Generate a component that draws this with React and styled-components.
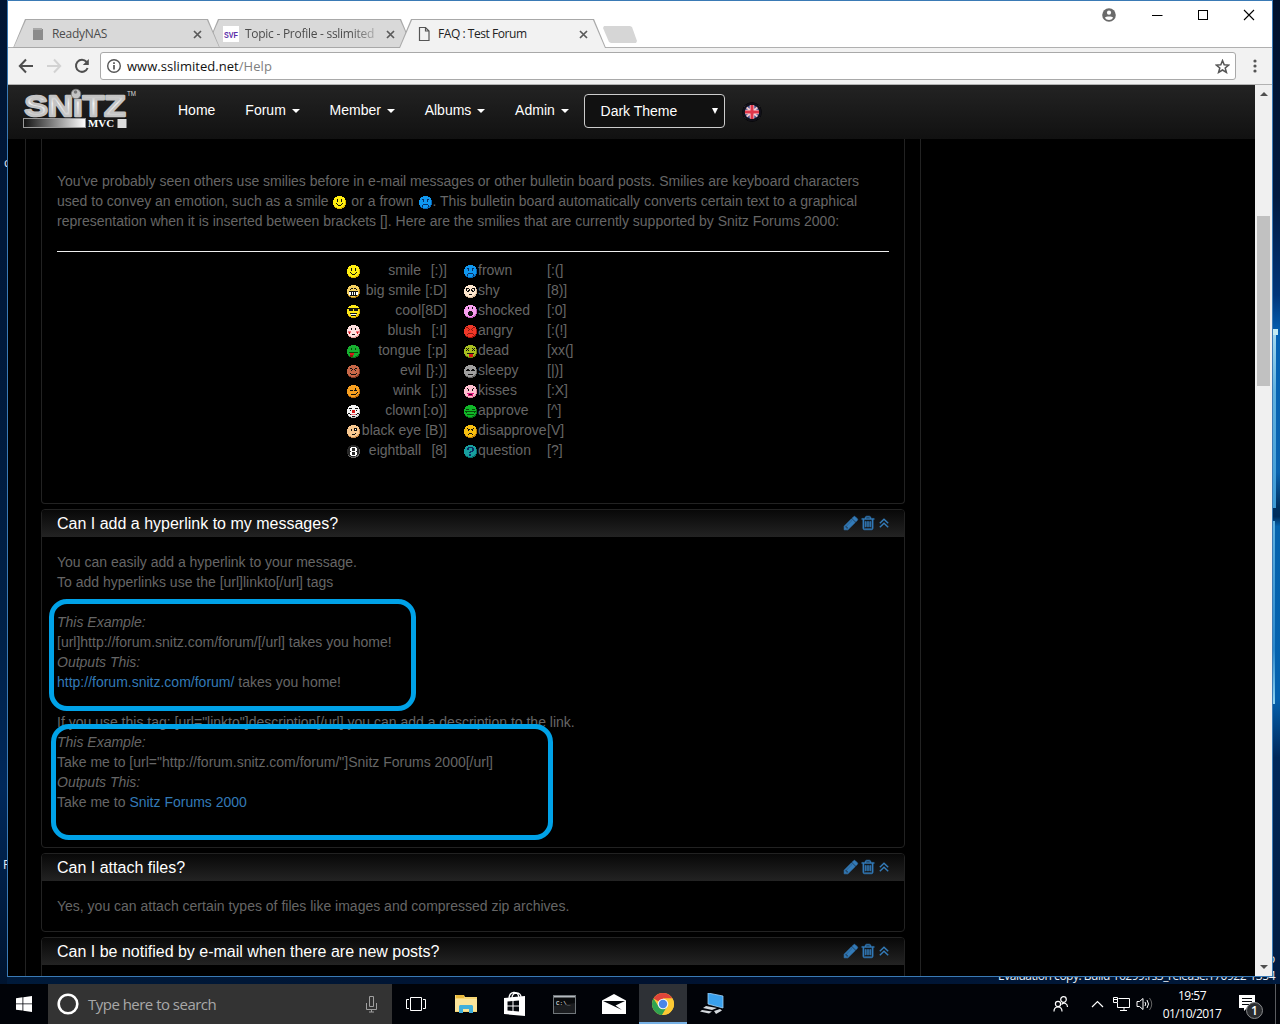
import React from "react";
import styled, { createGlobalStyle } from "styled-components";

const Global = createGlobalStyle`
  *, *::before, *::after { box-sizing: border-box; }
  body { margin: 0; background: #000; }
`;

const ui = `"Open Sans", "Noto Sans", sans-serif`;
const web = `"Liberation Sans", Arial, sans-serif`;

/* ---------- desktop and window ---------- */

const Desktop = styled.div`
  position: relative;
  width: 1280px;
  height: 1024px;
  overflow: hidden;
  display: flex;
  flex-direction: column;
  font-family: ${ui};
  background: linear-gradient(90deg, #001a3a, #001230 50%, #00193a);
`;

const RightGlow = styled.div`
  position: absolute;
  left: 1273px;
  top: 0;
  width: 7px;
  height: 984px;
  background:
    linear-gradient(#c4ecf4, #c4ecf4) 0 329px / 5px 6px no-repeat,
    linear-gradient(#a9dcf0, #5fb0df 35%, #3d9ad6) 0 329px / 3px 179px no-repeat,
    linear-gradient(#5fb2e2, #2b88cc 70%, #8fd4f2) 0 521px / 2px 183px no-repeat,
    linear-gradient(#00112c, #001a40 20%, #00357a 30%, #0563b5 34%, #0a63ae 48%, #003060 51.5%, #002d5c 52.5%, #0563ad 53.5%, #0461ae 71%, #00285a 77%, #001b40);
`;

const LeftGlow = styled.div`
  position: absolute;
  left: 0;
  top: 0;
  width: 7px;
  height: 984px;
  background: linear-gradient(#001534, #001a3c 40%, #002148 65%, #00285a 80%, #00142f);
`;

const DeskLabel = styled.span`
  position: absolute;
  left: ${(p) => p.$x}px;
  top: ${(p) => p.$y}px;
  font-size: 12px;
  line-height: 16px;
  letter-spacing: ${(p) => p.$ls || 0}px;
  white-space: nowrap;
  color: #e8eef5;
`;

const Window = styled.div`
  position: relative;
  width: 1266px;
  height: 977px;
  margin-left: 7px;
  margin-bottom: 7px;
  flex: none;
  display: flex;
  flex-direction: column;
  border: 1px solid #3a7ab5;
  background: #fff;
`;

const TitleBar = styled.div`
  display: flex;
  justify-content: space-between;
  height: 46px;
  flex: none;
`;

const Tabs = styled.div`
  display: flex;
  align-items: flex-end;
  padding-left: 5px;
  height: 47px;
`;

const tabShape = `polygon(12px 0, calc(100% - 12px) 0, 100% 100%, 0 100%)`;

const Tab = styled.div`
  position: relative;
  z-index: ${(p) => p.$z};
  width: 207px;
  height: 29px;
  margin-right: -14px;
  background: #a8a8a8;
  clip-path: ${tabShape};
  display: flex;
  align-items: center;
  padding: 1px 18px 0 17px;
  &::before {
    content: "";
    position: absolute;
    inset: 1px 1px ${(p) => (p.$active ? "0" : "1px")} 1px;
    background: ${(p) => (p.$active ? "#f2f2f2" : "#d9d9d9")};
    clip-path: ${tabShape};
  }
  > * { position: relative; }
`;

const TabTitle = styled.span`
  flex: 1;
  margin-left: ${(p) => p.$gap || 6}px;
  font-size: 12px;
  line-height: 16px;
  letter-spacing: ${(p) => p.$ls || 0}px;
  white-space: nowrap;
  color: ${(p) => (p.$active ? "#222" : "#4c4c4c")};
  ${(p) => p.$fade && "mask-image: linear-gradient(90deg, #000 105px, rgba(0,0,0,.3) 130px);"}
`;

const NewTab = styled.div`
  width: 34px;
  height: 17px;
  margin: 0 0 5px 11px;
  background: #d6d6d6;
  clip-path: polygon(1px 0, 27px 0, 29px 1px, 34px 15px, 33px 17px, 8px 17px, 6px 16px, 0 2px);
`;

const WinControls = styled.div`
  display: flex;
  gap: 31px;
  align-items: center;
  height: 28px;
  padding-right: 16px;
`;

const Toolbar = styled.div`
  display: flex;
  align-items: center;
  height: 38px;
  flex: none;
  padding: 0 9px 0 10px;
  background: #f2f2f2;
  border-top: 1px solid #b0b0b0;
  border-bottom: 1px solid #b2b2b2;
`;

const NavIcons = styled.div`
  display: flex;
  gap: 12px;
  width: 82px;
`;

const Omnibox = styled.div`
  flex: 1;
  display: flex;
  align-items: center;
  height: 28px;
  padding: 0 5px;
  background: #fff;
  border: 1px solid #a9a9a9;
  border-radius: 3px;
`;

const Url = styled.span`
  flex: 1;
  margin-left: 5px;
  font-size: 13px;
  letter-spacing: 0.04px;
  color: #111;
  span { color: #808080; }
`;

const MenuSlot = styled.div`
  width: 17px;
  margin-left: 10px;
  display: flex;
  justify-content: center;
`;

/* ---------- web page ---------- */

const Viewport = styled.div`
  display: flex;
  height: 891px;
  overflow: hidden;
`;

const Page = styled.div`
  position: relative;
  width: 1247px;
  height: 891px;
  overflow: hidden;
  display: flex;
  flex-direction: column;
  background: #000;
  font-family: ${web};
`;

const NavBar = styled.nav`
  display: flex;
  height: 54px;
  flex: none;
  padding-left: 15px;
  background: linear-gradient(#232323, #111);
`;

const LogoSlot = styled.div`
  width: 140px;
  padding-top: 3px;
`;

const NavItem = styled.div`
  padding: 15px;
  font-size: 14px;
  line-height: 20px;
  color: #fff;
  white-space: nowrap;
`;

const Caret = styled.i`
  display: inline-block;
  margin-left: 5.75px;
  vertical-align: middle;
  border-top: 4px solid #fff;
  border-left: 4px solid transparent;
  border-right: 4px solid transparent;
`;

const ThemeSelect = styled.div`
  display: flex;
  align-items: center;
  justify-content: space-between;
  width: 141px;
  height: 34px;
  margin-top: 9px;
  padding: 0 6px 0 16px;
  border: 1px solid #ccc;
  border-radius: 4px;
  background: #111;
  color: #fff;
  font-size: 14px;
`;

const SelectArrow = styled.i`
  border-top: 6px solid #fff;
  border-left: 3.5px solid transparent;
  border-right: 3.5px solid transparent;
`;

const FlagSlot = styled.div`
  padding: 17px 0 0 17px;
`;

const Column = styled.main`
  width: 896px;
  height: 837px;
  margin-left: 17px;
  padding: 0 15px;
  border-left: 1px solid #222;
  border-right: 1px solid #222;
`;

const Panel = styled.section`
  width: 864px;
  margin-bottom: 5px;
  border: 1px solid #222;
  border-radius: 4px;
  overflow: hidden;
  ${(p) => p.$cut && "border-top: 0; border-top-left-radius: 0; border-top-right-radius: 0; height: 365px;"}
`;

const PanelHead = styled.header`
  display: flex;
  align-items: center;
  justify-content: space-between;
  height: 27px;
  padding: 0 15px;
  background: linear-gradient(#080808, #232323);
  color: #fff;
  font-size: 16px;
`;

const Actions = styled.span`
  display: flex;
  align-items: center;
  gap: 2px;
  padding-bottom: 1px;
  color: #337ab7;
`;

const PanelBody = styled.div`
  padding: ${(p) => p.$top || 15}px 15px 15px;
  font-size: 14px;
  line-height: 20px;
  color: #666;
`;

const Line = styled.div`
  height: 20px;
  white-space: nowrap;
  font-style: ${(p) => (p.$em ? "italic" : "normal")};
`;

const Link = styled.a`
  color: #337ab7;
`;

const Rule = styled.hr`
  height: 1px;
  margin: 20px 0 8px;
  border: 0;
  background: #eee;
`;

const SmileyTable = styled.div`
  width: 228px;
  margin: 0 auto 0 289px;
`;

const SmileyRow = styled.div`
  display: grid;
  grid-template-columns: 15px 60px 26px 16px 15px 69px 27px;
  height: 20px;
  white-space: nowrap;
`;

const Cell = styled.span`
  display: flex;
  align-items: center;
  justify-content: ${(p) => (p.$right ? "flex-end" : "flex-start")};
  padding-top: ${(p) => (p.$icon ? 2 : 0)}px;
`;

const Highlight = styled.div`
  position: absolute;
  left: ${(p) => p.$x}px;
  top: ${(p) => p.$y}px;
  width: ${(p) => p.$w}px;
  height: ${(p) => p.$h}px;
  border: 5px solid #00a2e8;
  border-radius: 18px;
`;

const ScrollBar = styled.div`
  display: flex;
  flex-direction: column;
  align-items: center;
  justify-content: space-between;
  width: 17px;
  padding: 7px 0;
  background: #f0f0f0;
`;

const ScrollTrack = styled.div`
  flex: 1;
  padding-top: 120px;
`;

const Thumb = styled.div`
  width: 13px;
  height: 170px;
  background: #c1c1c1;
`;

const Arrow = styled.i`
  border-left: 4px solid transparent;
  border-right: 4px solid transparent;
  ${(p) => (p.$down ? "border-top" : "border-bottom")}: 4px solid #505050;
`;

/* ---------- taskbar ---------- */

const TaskBar = styled.div`
  position: relative;
  display: flex;
  height: 40px;
  background: #010308;
`;

const TaskButton = styled.div`
  display: flex;
  align-items: center;
  justify-content: center;
  width: 48px;
  height: 40px;
  margin-right: ${(p) => p.$mr ?? 1}px;
  ${(p) => p.$active && "background: #2e3136; border-bottom: 2px solid #76b0e4; padding-top: 2px;"}
`;

const SearchBox = styled.div`
  display: flex;
  align-items: center;
  width: 344px;
  height: 40px;
  padding: 0 13px 0 8px;
  background: #333;
  color: #a8a8a8;
  font-size: 15px;
  span { flex: 1; margin-left: 8px; letter-spacing: -0.52px; }
`;

const Tray = styled.div`
  display: flex;
  align-items: center;
  margin-left: auto;
  color: #fff;
`;

const TraySlot = styled.div`
  display: flex;
  justify-content: center;
  width: ${(p) => p.$w}px;
`;

const Clock = styled.div`
  width: 76px;
  padding-top: 1px;
  text-align: center;
  font-size: 12px;
  line-height: 18px;
  letter-spacing: -0.5px;
`;

const ShowDesktop = styled.div`
  width: 5px;
  height: 40px;
  border-left: 1px solid #5a5c60;
`;

/* ---------- smilies ---------- */

const INK = { k: "#111", w: "#fff", r: "#d81818", d: "#8a1a10", p: "#e0107a", o: "#f0707c", g: "#084a08", n: "#0a2f66" };
const MASK = "M4 0h5v1h2v1h1v2h1v5h-1v2h-1v1h-2v1h-5v-1h-2v-1h-1v-2h-1v-5h1v-2h1v-1h2z";

const FACES = {
  smile: ["#ffee10", "#e0b800", "k4,3,1,3 k8,3,1,3 k3,7,1,1 k9,7,1,1 k4,8,1,1 k8,8,1,1 k5,9,3,1"],
  bigsmile: ["#f4d060", "#b98514", "k3,4,1,1 k4,3,2,1 k7,3,2,1 k9,4,1,1 k2,6,9,1 w2,7,9,3 k4,7,1,3 k6,7,1,3 k8,7,1,3 k3,10,7,1"],
  cool: ["#ffe818", "#d8a800", "k1,3,11,1 k2,4,4,2 k7,4,4,2 k3,8,7,1 w4,9,5,1 k4,10,5,1"],
  blush: ["#ffe0e0", "#e8a0a0", "k4,3,1,2 k8,3,1,2 o1,6,3,2 o9,6,3,2 r2,7,1,2 r10,7,1,2 k5,9,3,1"],
  tongue: ["#18b030", "#0a7a1c", "g4,3,1,2 g8,3,1,2 g2,7,9,1 r3,8,4,2 d3,10,3,2"],
  evil: ["#c86848", "#8a3a24", "k3,3,2,1 k5,4,1,1 k7,4,1,1 k8,3,2,1 k4,5,1,1 k8,5,1,1 k3,8,1,1 k4,9,5,1 k9,8,1,1"],
  wink: ["#f8a020", "#c06a08", "k3,5,3,1 k8,3,1,2 k7,5,3,1 k10,7,1,1 k4,9,5,1 k9,8,1,1"],
  clown: ["#f4f4f4", "#c8c8c8", "k2,3,3,1 k8,3,3,1 k3,5,1,1 k9,5,1,1 r5,5,3,3 k1,8,2,1 k10,8,2,1 k3,9,1,1 k9,9,1,1 o4,9,5,1 k5,11,3,1"],
  blackeye: ["#f8c890", "#d09050", "k4,4,1,2 k7,3,3,3 w8,4,1,1 k5,9,3,1 k8,8,1,1"],
  eightball: ["#282828", "#686868", "w4,2,5,1 w3,3,2,3 w8,3,2,3 w4,6,5,1 w3,7,2,3 w8,7,2,3 w4,10,5,1"],
  frown: ["#1098f0", "#0868b8", "n3,3,2,1 n8,3,2,1 n4,4,1,2 n8,4,1,2 n4,8,5,1 n3,9,1,2 n9,9,1,2"],
  shy: ["#ffe8d0", "#d8b898", "k2,3,3,1 k8,3,3,1 k2,4,1,2 k5,4,1,2 k7,4,1,2 k10,4,1,2 k4,5,1,1 k8,5,1,1 k3,6,2,1 k8,6,2,1 k5,9,3,1"],
  shocked: ["#f8a0f0", "#c860c0", "k4,2,1,2 k8,2,1,2 k5,6,3,1 k4,7,5,3 k5,10,3,1"],
  angry: ["#f03828", "#a81810", "d2,2,2,1 d4,3,1,1 d8,3,1,1 d9,2,2,1 d4,5,1,1 d8,5,1,1 d5,4,1,1 d7,4,1,1 d4,8,5,1 d3,9,1,1 d9,9,1,1"],
  dead: ["#a8c020", "#708408", "k2,3,1,1 k4,3,1,1 k3,4,1,1 k2,5,1,1 k4,5,1,1 k8,3,1,1 k10,3,1,1 k9,4,1,1 k8,5,1,1 k10,5,1,1 k3,8,7,1 r5,9,4,3"],
  sleepy: ["#a0a0a0", "#686868", "k2,5,4,1 k7,5,4,1 k3,4,2,1 k8,4,2,1 k4,9,5,1"],
  kisses: ["#ffc0d0", "#e088a0", "k3,3,1,1 k4,4,1,1 k8,4,1,1 k9,3,1,1 k4,5,1,1 k8,5,1,1 p3,8,7,1 p4,9,5,2 k5,9,3,1"],
  approve: ["#10b828", "#087818", "g2,4,3,1 g8,4,3,1 g1,6,11,1 g2,7,1,1 g10,7,1,1 g3,9,7,1"],
  disapprove: ["#f8c010", "#c08008", "k3,3,1,1 k4,4,2,1 k7,4,2,1 k9,3,1,1 k4,5,1,1 k8,5,1,1 k5,8,3,1 k4,9,1,1 k8,9,1,1"],
  question: ["#18a0a0", "#087070", "n4,2,5,1 n3,3,2,2 n8,3,2,3 n6,6,3,1 n5,7,2,1 n5,9,2,2"],
};

const Face = styled.svg`
  width: 15px;
  height: 15px;
  flex: none;
  vertical-align: middle;
`;

function Smiley({ name }) {
  const [fill, shade, marks] = FACES[name];
  return (
    <Face viewBox="-1 -1 15 15" shapeRendering="crispEdges">
      <path d={MASK} fill={shade} />
      <path d="M4 0h5v1h2v1h1v7h-1v1h-1v1h-2v1h-4v-1h-2v-1h-1v-1h-1v-5h1v-2h1v-1h2z" fill={fill} />
      {marks.split(" ").map((m) => {
        const [x, y, w, h] = m.slice(1).split(",");
        return <rect key={m} x={x} y={y} width={w} height={h} fill={INK[m[0]]} />;
      })}
    </Face>
  );
}

const SMILIES = [
  ["smile", "smile", "[:)]", "frown", "frown", "[:(]"],
  ["bigsmile", "big smile", "[:D]", "shy", "shy", "[8)]"],
  ["cool", "cool", "[8D]", "shocked", "shocked", "[:0]"],
  ["blush", "blush", "[:I]", "angry", "angry", "[:(!]"],
  ["tongue", "tongue", "[:p]", "dead", "dead", "[xx(]"],
  ["evil", "evil", "[}:)]", "sleepy", "sleepy", "[|)]"],
  ["wink", "wink", "[;)]", "kisses", "kisses", "[:X]"],
  ["clown", "clown", "[:o)]", "approve", "approve", "[^]"],
  ["blackeye", "black eye", "[B)]", "disapprove", "disapprove", "[V]"],
  ["eightball", "eightball", "[8]", "question", "question", "[?]"],
];

/* ---------- icons ---------- */

const Icon = styled.svg`
  display: block;
  flex: none;
  margin: ${(p) => p.$m || 0};
`;

const Svg = ({ w = 16, h = w, box, fill = "none", children, ...rest }) => (
  <Icon width={w} height={h} viewBox={box || `0 0 ${w} ${h}`} fill={fill} {...rest}>
    {children}
  </Icon>
);

const TabClose = () => (
  <Svg w={9}><path d="M1 1l7 7M8 1l-7 7" stroke="#5a5a5a" strokeWidth="1.7" /></Svg>
);

const PencilIcon = () => (
  <Svg w={16} box="0 0 1792 1792" fill="currentColor" $m="0 -1px 0 0">
    <path d="M491 1536l91-91-235-235-91 91v107h128v128h107zm523-928q0-22-22-22-10 0-17 7l-542 542q-7 7-7 17 0 22 22 22 10 0 17-7l542-542q7-7 7-17zm-54-192l416 416-832 832h-416v-416zm683 96q0 53-37 90l-166 166-416-416 166-165q36-38 90-38 53 0 91 38l235 234q37 39 37 91z" stroke="currentColor" strokeWidth="70" />
  </Svg>
);

const TrashIcon = () => (
  <Svg w={16} box="0 0 1792 1792" fill="currentColor">
    <path stroke="currentColor" strokeWidth="60" d="M704 736v576q0 14-9 23t-23 9h-64q-14 0-23-9t-9-23v-576q0-14 9-23t23-9h64q14 0 23 9t9 23zm256 0v576q0 14-9 23t-23 9h-64q-14 0-23-9t-9-23v-576q0-14 9-23t23-9h64q14 0 23 9t9 23zm256 0v576q0 14-9 23t-23 9h-64q-14 0-23-9t-9-23v-576q0-14 9-23t23-9h64q14 0 23 9t9 23zm128 724v-948h-896v948q0 22 7 40.5t14.5 27 10.5 8.5h832q3 0 10.5-8.5t14.5-27 7-40.5zm-672-1076h448l-48-117q-7-9-17-11h-317q-10 2-17 11zm928 32v64q0 14-9 23t-23 9h-96v948q0 83-47 143.5t-113 60.5h-832q-66 0-113-58.5t-47-141.5v-952h-96q-14 0-23-9t-9-23v-64q0-14 9-23t23-9h309l70-167q15-37 54-63t79-26h320q40 0 79 26t54 63l70 167h309q14 0 23 9t9 23z" />
  </Svg>
);

const CollapseIcon = () => (
  <Svg w={11} h={14}>
    <path d="M1.8 7.300L6 3.300l4.200 4M1.800 11.300L6 7.300l4.200 4" stroke="currentColor" strokeWidth="1.500" />
  </Svg>
);

const Logo = () => (
  <Svg w={116} h={42}>
    <defs>
      <linearGradient id="metal" x1="0" y1="0" x2="0" y2="1">
        <stop offset="0" stopColor="#8c8c8c" />
        <stop offset=".45" stopColor="#f4f4f4" />
        <stop offset="1" stopColor="#bdbdbd" />
      </linearGradient>
      <linearGradient id="bar">
        <stop offset="0" stopColor="#111" />
        <stop offset="1" stopColor="#fff" />
      </linearGradient>
    </defs>
    <text x="1.500" y="27.500" textLength="101" lengthAdjust="spacingAndGlyphs" fontFamily="Liberation Sans, sans-serif" fontWeight="700" fontSize="30" fill="url(#metal)" stroke="#c4c4c4" strokeWidth="2.400" strokeLinejoin="round">SNıTZ</text>
    <circle cx="53" cy="6" r="4.800" fill="#c4c4c4" stroke="#777" strokeWidth=".8" />
    <circle cx="52.500" cy="4" r="1.800" fill="#777" />
    <text x="104" y="8" fontFamily="Liberation Sans, sans-serif" fontSize="6.5" textLength="9" lengthAdjust="spacingAndGlyphs" fill="#ddd">TM</text>
    <rect x=".5" y="30.5" width="62" height="9" fill="url(#bar)" stroke="#999" />
    <text x="65" y="39" textLength="26" lengthAdjust="spacingAndGlyphs" fontFamily="Liberation Serif, serif" fontWeight="700" fontSize="11" fill="#fff">MVC</text>
    <rect x="94.5" y="31" width="9" height="9" fill="#ddd" />
  </Svg>
);

const Flag = () => (
  <Svg w={20}>
    <circle cx="10" cy="10" r="9" fill="#1c1c28" stroke="#000" strokeWidth="1.6" />
    <g>
      <rect x="3" y="4" width="14" height="12" fill="#3b4a8c" />
      <path d="M3 4l14 12M17 4L3 16" stroke="#f0c8cc" strokeWidth="2" />
      <path d="M10 3v14M2 10h16" stroke="#f4d8dc" strokeWidth="4.600" />
      <path d="M10 3v14M2 10h16" stroke="#e0364a" strokeWidth="3" />
    </g>
    <circle cx="10" cy="10" r="8.4" stroke="#101018" strokeWidth="2.400" />
  </Svg>
);

const ChromeIcon = () => (
  <Svg w={24}>
    <circle cx="12" cy="12" r="11" fill="#fcc934" />
    <path d="M12 12L2.5 6.5A11 11 0 0 1 21.5 6.5H12z" fill="#e0453a" />
    <path d="M2.5 6.5A11 11 0 0 0 11 23l5-8.5-4-2.5-4.7 2z" fill="#2fa350" />
    <path d="M12 6.5h9.5A11 11 0 0 1 11.2 23l5.6-8.2z" fill="#fcc934" />
    <circle cx="12" cy="12" r="5.3" fill="#f4f4f4" />
    <circle cx="12" cy="12" r="4.2" fill="#4a86e8" />
  </Svg>
);

/* ---------- composition ---------- */

function QA({ title, children }) {
  return (
    <Panel>
      <PanelHead>
        {title}
        <Actions><PencilIcon /><TrashIcon /><CollapseIcon /></Actions>
      </PanelHead>
      {children && <PanelBody>{children}</PanelBody>}
    </Panel>
  );
}

function BrowserChrome() {
  return (
    <>
      <TitleBar>
        <Tabs>
          <Tab $z={2}>
            <Svg w={16}><path d="M3 2h9v1h1v11H3z" fill="#8b8b8b" /><path d="M3 2h9v2H3z" fill="#a8a8a8" /></Svg>
            <TabTitle $ls={-0.3}>ReadyNAS</TabTitle>
            <TabClose />
          </Tab>
          <Tab $z={1}>
            <Svg w={16}>
              <rect width="16" height="16" fill="#fff" />
              <text x="1" y="11.500" fontFamily="Liberation Sans, sans-serif" fontWeight="700" fontSize="9" textLength="14" lengthAdjust="spacingAndGlyphs" fill="#5b2fa8">SVF</text>
            </Svg>
            <TabTitle $fade $ls={-0.27}>Topic - Profile - sslimited</TabTitle>
            <TabClose />
          </Tab>
          <Tab $z={3} $active>
            <Svg w={16}><path d="M3.500 1.500h6l3.500 3.500v9.500h-9.500zM9.500 1.500v3.500h3.500" stroke="#555" strokeWidth="1.200" /></Svg>
            <TabTitle $active $ls={-0.45}>FAQ : Test Forum</TabTitle>
            <TabClose />
          </Tab>
          <NewTab />
        </Tabs>
        <WinControls>
          <Svg w={14} $m="0 3px 0 0">
            <circle cx="7" cy="7" r="6.8" fill="#6a6a6a" />
            <circle cx="7" cy="4.700" r="2.100" fill="#fff" />
            <path d="M2.800 9.800C4 8 10 8 11.200 9.800A5 5 0 0 1 2.800 9.800z" fill="#fff" />
          </Svg>
          <Svg w={14} $m="0 1px 0 0"><path d="M2 7.500h10.500" stroke="#000" /></Svg>
          <Svg w={14} $m="0 1px 0 0"><rect x="2.500" y="2.500" width="9" height="9" stroke="#000" /></Svg>
          <Svg w={14}><path d="M2 2l10 10M12 2L2 12" stroke="#000" strokeWidth="1.100" /></Svg>
        </WinControls>
      </TitleBar>
      <Toolbar>
        <NavIcons>
          <Svg w={16}><path d="M15 8H2M8 1.500L1.800 8 8 14.500" stroke="#4f4f4f" strokeWidth="2" /></Svg>
          <Svg w={16}><path d="M1 8h13M8 1.500L14.200 8 8 14.500" stroke="#d2d2d2" strokeWidth="2" /></Svg>
          <Svg w={16}>
            <path d="M13.600 10A6 6 0 1 1 12.600 4" stroke="#4f4f4f" strokeWidth="2" />
            <path d="M14.800 1v6H8.800z" fill="#4f4f4f" />
          </Svg>
        </NavIcons>
        <Omnibox>
          <Svg w={16}>
            <circle cx="8" cy="8" r="6.300" stroke="#555" strokeWidth="1.400" />
            <path d="M8 7v4.500M8 4.300v1.700" stroke="#555" strokeWidth="1.700" />
          </Svg>
          <Url>www.sslimited.net<span>/Help</span></Url>
          <Svg w={15}><path d="M7.500 1.600l1.700 4.200 4.500.3-3.500 2.900 1.200 4.400-3.900-2.400-3.900 2.400 1.200-4.400L1.300 6.100l4.500-.3z" stroke="#555" strokeWidth="1.500" /></Svg>
        </Omnibox>
        <MenuSlot>
          <Svg w={4} h={14}><circle cx="2" cy="2" r="1.600" fill="#555" /><circle cx="2" cy="7" r="1.600" fill="#555" /><circle cx="2" cy="12" r="1.600" fill="#555" /></Svg>
        </MenuSlot>
      </Toolbar>
    </>
  );
}

function ForumPage() {
  return (
    <Page>
      <NavBar>
        <LogoSlot><Logo /></LogoSlot>
        <NavItem>Home</NavItem>
        {["Forum", "Member", "Albums", "Admin"].map((n) => (
          <NavItem key={n}>{n}<Caret /></NavItem>
        ))}
        <ThemeSelect>Dark Theme<SelectArrow /></ThemeSelect>
        <FlagSlot><Flag /></FlagSlot>
      </NavBar>
      <Column>
        <Panel $cut>
          <PanelBody $top={32}>
            <Line>You've probably seen others use smilies before in e-mail messages or other bulletin board posts. Smilies are keyboard characters</Line>
            <Line>used to convey an emotion, such as a smile <Smiley name="smile" /> or a frown <Smiley name="frown" />. This bulletin board automatically converts certain text to a graphical</Line>
            <Line>representation when it is inserted between brackets []. Here are the smilies that are currently supported by Snitz Forums 2000:</Line>
            <Rule />
            <SmileyTable>
              {SMILIES.map(([a, an, ac, b, bn, bc]) => (
                <SmileyRow key={a}>
                  <Cell $icon><Smiley name={a} /></Cell>
                  <Cell $right>{an}</Cell>
                  <Cell $right>{ac}</Cell>
                  <span />
                  <Cell $icon><Smiley name={b} /></Cell>
                  <Cell>{bn}</Cell>
                  <Cell>{bc}</Cell>
                </SmileyRow>
              ))}
            </SmileyTable>
          </PanelBody>
        </Panel>
        <QA title="Can I add a hyperlink to my messages?">
          <Line>You can easily add a hyperlink to your message.</Line>
          <Line>To add hyperlinks use the [url]linkto[/url] tags</Line>
          <Line />
          <Line $em>This Example:</Line>
          <Line>[url]http://forum.snitz.com/forum/[/url] takes you home!</Line>
          <Line $em>Outputs This:</Line>
          <Line><Link>http://forum.snitz.com/forum/</Link> takes you home!</Line>
          <Line />
          <Line>If you use this tag: [url="linkto"]description[/url] you can add a description to the link.</Line>
          <Line $em>This Example:</Line>
          <Line>Take me to [url="http://forum.snitz.com/forum/"]Snitz Forums 2000[/url]</Line>
          <Line $em>Outputs This:</Line>
          <Line>Take me to <Link>Snitz Forums 2000</Link></Line>
          <Line />
        </QA>
        <QA title="Can I attach files?">
          <Line>Yes, you can attach certain types of files like images and compressed zip archives.</Line>
        </QA>
        <QA title="Can I be notified by e-mail when there are new posts?">
          <Line />
        </QA>
      </Column>
      <Highlight $x={41} $y={514} $w={367} $h={112} />
      <Highlight $x={43} $y={639} $w={502} $h={116} />
    </Page>
  );
}

function Taskbar() {
  return (
    <TaskBar>
      <TaskButton $mr={0}>
        <Svg w={16}><path d="M0 2.300L6.500 1.300v6.200H0zM7.300 1.200L16 0v7.500H7.300zM0 8.300h6.500v6.300L0 13.700zM7.300 8.300H16V16l-8.700-1.200z" fill="#fff" /></Svg>
      </TaskButton>
      <SearchBox>
        <Svg w={24}><circle cx="12" cy="12" r="9.300" stroke="#fff" strokeWidth="2.600" /></Svg>
        <span>Type here to search</span>
        <Svg w={14} h={18}><path d="M4.500 1.500h4v10h-4zM1.500 8v6.500h10V8M6.500 14.500v2.500M4 17h5" stroke="#a0a0a0" strokeWidth="1" /></Svg>
      </SearchBox>
      <TaskButton $mr={2}>
        <Svg w={20} h={16}><path d="M4.500 1.500h11v13h-11zM3 3.500H.5v9H3M17 3.500h2.500v9H17" stroke="#fff" /></Svg>
      </TaskButton>
      <TaskButton>
        <Svg w={22} h={20}>
          <path d="M0 1h9l1 2h12v15H0z" fill="#f7d774" /><path d="M0 5h22v12H0z" fill="#fbe59b" />
          <path d="M4 19v-7l1-1h12l1 1v7h-4v-4H8v4z" fill="#41b0dc" /><path d="M1 1h8v3H1z" fill="#e9b93c" />
        </Svg>
      </TaskButton>
      <TaskButton>
        <Svg w={22} h={26}>
          <path d="M0 7l21-2v20L0 23z" fill="#fff" />
          <path d="M5 8c0-8 9-9 10-1M8 7c0-7 9-6 9-1" stroke="#fff" strokeWidth="1.300" />
          <path d="M3.500 10.500l5-.5v4.500h-5zM9.500 9.900l5.500-.5v5.100H9.500zM3.500 15.500h5V20l-5-.5zM9.500 15.500H15v5.100l-5.500-.5z" fill="#04070c" />
        </Svg>
      </TaskButton>
      <TaskButton $mr={2}>
        <Svg w={23} h={19}>
          <rect x=".5" y=".5" width="22" height="18" fill="#0a0c0e" stroke="#70767a" />
          <path d="M1 1h21v1.500H1z" fill="#b4babf" />
          <text x="3" y="9.500" fontFamily="Liberation Mono, monospace" fontSize="6" fill="#fff">C:\_</text>
          <path d="M1 11l21-3v10H1z" fill="#2b2e31" opacity=".5" />
        </Svg>
      </TaskButton>
      <TaskButton>
        <Svg w={24} h={20}>
          <path d="M0 6.500L12 0l12 6.500V20H0z" fill="#fff" />
          <path d="M1 7h22l-9.500 4.500L20 16z" fill="#05080c" />
        </Svg>
      </TaskButton>
      <TaskButton $active><ChromeIcon /></TaskButton>
      <TaskButton>
        <Svg w={24} h={22}>
          <path d="M8 0l15 3v12L8 11z" fill="#3aa0ec" stroke="#9fd0f4" strokeWidth=".8" />
          <path d="M6 13l11 2-5 2-9-2zM2 17l10 1.500L9 20.500 0 18.500zM14 18l6-2 2 1.500-6 3.500z" fill="#d5dade" />
        </Svg>
      </TaskButton>
      <Tray>
        <TraySlot $w={50}>
          <Svg w={16}>
            <circle cx="10.500" cy="3.500" r="2.800" stroke="#fff" strokeWidth="1.200" /><circle cx="5" cy="8" r="2.600" stroke="#fff" strokeWidth="1.200" />
            <path d="M1 15.500c0-6 8-6 8 0M8.500 8.500c2.500-2.500 6-1 6 2.500" stroke="#fff" strokeWidth="1.200" />
          </Svg>
        </TraySlot>
        <TraySlot $w={22}><Svg w={13} h={8}><path d="M1 7l5.500-5.500L12 7" stroke="#fff" strokeWidth="1.200" /></Svg></TraySlot>
        <TraySlot $w={26}>
          <Svg w={17} h={15}><path d="M5.500 1.500h11v9H4.500V6M11 10.500v3M7 13.500h7M.5.500h4v5h-4zM0 2.500h4" stroke="#fff" /></Svg>
        </TraySlot>
        <TraySlot $w={20}>
          <Svg w={17} h={14}><path d="M1 4.500h2.500L7 1.500v11L3.500 9.500H1zM9 5q1.500 2 0 4M11 3q3 4 0 8" stroke="#fff" /><path d="M13.500 1q4.500 6 0 12" stroke="#666" /></Svg>
        </TraySlot>
        <Clock>19:57<br />01/10/2017</Clock>
        <TraySlot $w={45}>
          <Svg w={26} h={26} $m="5px 4px 0 0">
            <path d="M1 1h16v13H9l-3 3v-3H1z" fill="#fff" />
            <path d="M4 4.500h10M4 7.500h10M4 10.500h7" stroke="#05080c" />
            <circle cx="16.500" cy="16.500" r="8" fill="#2b2d30" stroke="#8a8c8e" />
            <text x="16.500" y="21" textAnchor="middle" fontFamily="Open Sans, sans-serif" fontSize="12" fontWeight="600" fill="#fff">1</text>
          </Svg>
        </TraySlot>
        <ShowDesktop />
      </Tray>
    </TaskBar>
  );
}

export default function App() {
  return (
    <Desktop>
      <Global />
      <LeftGlow />
      <RightGlow />
      <DeskLabel $x={4} $y={155}>c</DeskLabel>
      <DeskLabel $x={3} $y={857}>P</DeskLabel>
      <DeskLabel $x={1268} $y={951}>o</DeskLabel>
      <DeskLabel $x={998} $y={968} $ls={-0.48}>Evaluation copy. Build 16299.rs3_release.170922-1354</DeskLabel>
      <Window>
        <BrowserChrome />
        <Viewport>
          <ForumPage />
          <ScrollBar>
            <Arrow />
            <ScrollTrack><Thumb /></ScrollTrack>
            <Arrow $down />
          </ScrollBar>
        </Viewport>
      </Window>
      <Taskbar />
    </Desktop>
  );
}
